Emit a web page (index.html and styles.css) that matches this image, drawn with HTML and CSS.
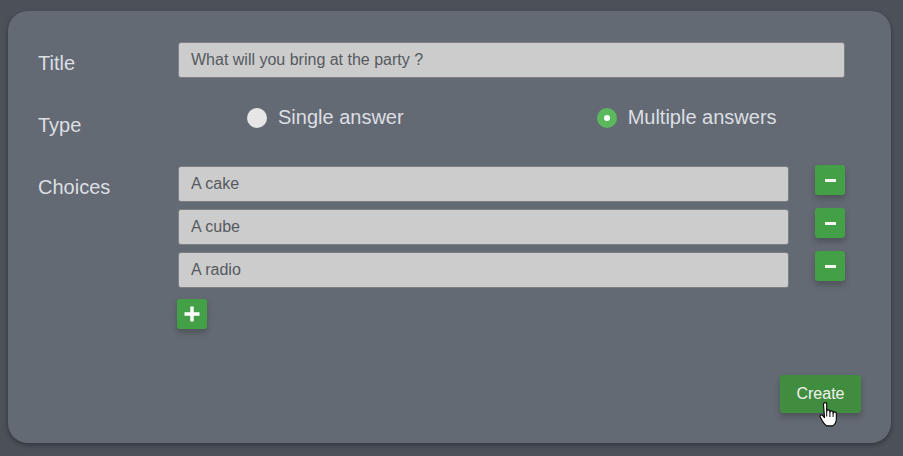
FILE: index.html
```html
<!DOCTYPE html>
<html lang="en">
<head>
<meta charset="utf-8">
<title>New poll</title>
<link rel="stylesheet" href="styles.css">
</head>
<body>
<div class="page">
  <form class="card">
    <div class="row row-title">
      <label class="label" for="title">Title</label>
      <input id="title" class="text-input" type="text" value="What will you bring at the party ?">
    </div>
    <div class="row row-type">
      <span class="label">Type</span>
      <div class="radios">
        <label class="radio"><span class="dot"></span><span>Single answer</span></label>
        <label class="radio checked"><span class="dot"></span><span>Multiple answers</span></label>
      </div>
    </div>
    <div class="row row-choices">
      <span class="label">Choices</span>
      <div class="choices">
        <div class="choice">
          <input class="text-input" type="text" value="A cake">
          <button type="button" class="icon-btn minus"><span class="bar"></span></button>
        </div>
        <div class="choice">
          <input class="text-input" type="text" value="A cube">
          <button type="button" class="icon-btn minus"><span class="bar"></span></button>
        </div>
        <div class="choice">
          <input class="text-input" type="text" value="A radio">
          <button type="button" class="icon-btn minus"><span class="bar"></span></button>
        </div>
        <button type="button" class="icon-btn plus">
          <svg width="18" height="18" viewBox="0 0 18 18"><path d="M9 1.5v15M1.5 9h15" stroke="#fff" stroke-width="3.4" fill="none"/></svg>
        </button>
      </div>
    </div>
    <div class="actions">
      <div class="create-wrap">
        <button type="button" class="create">Create</button>
        <svg class="cursor" width="20" height="27" viewBox="0 0 20 27">
          <path d="M5.5 2.2a1.6 1.6 0 0 1 3.2 0v7.3a1.6 1.6 0 0 1 3.2 0v1a1.6 1.6 0 0 1 3.2 0v1a1.6 1.6 0 0 1 3.2 0v5.5c0 3.2-1.4 5.6-3.6 6.9h-6c-1.9-1.1-3.4-3.2-4.9-6l-1.6-3.1a1.4 1.4 0 0 1 2.3-1.5l2 2.4z" fill="#fff" stroke="#000" stroke-width="1.1" stroke-linejoin="round"/>
          <path d="M8.7 9.5v5M11.9 10.5v4.5M15.1 11.5v3.5" stroke="#000" stroke-width="1" fill="none"/>
        </svg>
      </div>
    </div>
  </form>
</div>
</body>
</html>
```

FILE: styles.css
```css
html, body {
  margin: 0;
  padding: 0;
}
body {
  background: #4b5059;
  font-family: "Liberation Sans", Arial, sans-serif;
}
.page {
  padding: 11px 12px 13px 8px;
  height: 456px;
  box-sizing: border-box;
}
.card {
  background: #646a73;
  border-radius: 20px;
  padding: 31px 30px 30px 30px;
  box-shadow: 0 2px 4px rgba(0, 0, 0, 0.35);
  margin: 0;
}
.row {
  display: grid;
  grid-template-columns: 140px 1fr;
  margin-right: 16px;
  align-items: start;
}
.label {
  color: #dcdfe3;
  font-size: 20px;
  line-height: 23px;
  margin-top: 10px;
}
.row-title {
  margin-bottom: 26px;
}
.row-type {
  margin-bottom: 29px;
}
.text-input {
  box-sizing: border-box;
  height: 36px;
  width: 100%;
  background: #cccccc;
  border: 1px solid #7c7f84;
  border-radius: 3px;
  padding: 0 12px;
  font-family: "Liberation Sans", Arial, sans-serif;
  font-size: 16px;
  color: #555a60;
  outline: none;
  margin: 0;
}
.radios {
  display: flex;
  padding-left: 69px;
  padding-top: 2px;
  gap: 193px;
}
.radio {
  display: flex;
  align-items: center;
  gap: 11px;
  color: #dcdfe3;
  font-size: 20px;
  line-height: 23px;
}
.dot {
  width: 20px;
  height: 20px;
  border-radius: 50%;
  background: #e6e6e6;
  box-sizing: border-box;
  display: flex;
  align-items: center;
  justify-content: center;
}
.radio.checked .dot {
  background: #5cb85c;
}
.radio.checked .dot::after {
  content: "";
  width: 6px;
  height: 6px;
  border-radius: 50%;
  background: #fff;
}
.choices {
  display: flex;
  flex-direction: column;
  align-items: flex-start;
  gap: 7px;
}
.choice {
  display: flex;
  align-items: flex-start;
  gap: 26px;
  width: 100%;
}
.choice .text-input {
  flex: 1;
}
.icon-btn {
  width: 30px;
  height: 30px;
  border: none;
  border-radius: 3px;
  background: #43a047;
  box-shadow: 0 4px 6px rgba(0, 0, 0, 0.22);
  padding: 0;
  display: flex;
  align-items: center;
  justify-content: center;
  flex: none;
}
.minus {
  margin-top: -1px;
}
.minus .bar {
  width: 11px;
  height: 3px;
  background: #f4f4f0;
}
.plus {
  margin-top: 4px;
  margin-left: -1px;
}
.actions {
  display: flex;
  justify-content: flex-end;
  margin-top: 46px;
}
.create-wrap {
  position: relative;
}
.create {
  width: 81px;
  height: 38px;
  border: none;
  border-radius: 3px;
  background: #418d40;
  color: #f2f2ee;
  font-family: "Liberation Sans", Arial, sans-serif;
  font-size: 16px;
  padding: 0;
  box-shadow: 0 4px 6px rgba(0, 0, 0, 0.22);
  display: block;
}
.cursor {
  position: absolute;
  left: 38px;
  top: 27px;
}
```
